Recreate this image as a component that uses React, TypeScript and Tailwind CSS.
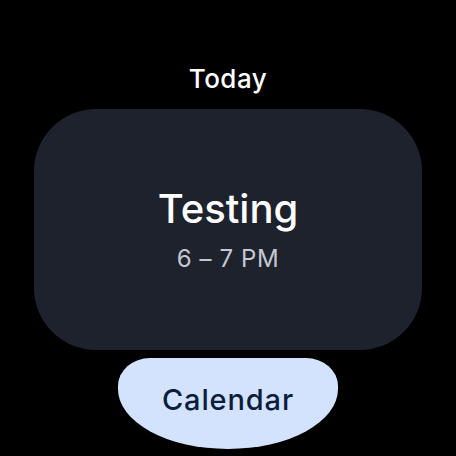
export default function App() {
  return (
    <div
      className="flex h-[456px] w-[456px] flex-col items-center overflow-hidden bg-black"
      style={{ fontFamily: "Inter, 'Open Sans', sans-serif" }}
    >
      <div className="mt-[62px] h-[34px] text-[26px] font-medium leading-[34px] tracking-[0.02em] text-white">Today</div>

      <div className="mt-[13px] flex h-[241px] w-[388px] flex-col items-center rounded-[62px] bg-[#1e222d] pt-[76px]">
        <div className="text-[40px] font-medium leading-[48px] text-white">Testing</div>
        <div className="mt-[10px] text-[24px] leading-[32px] tracking-wide text-[#c5c8d2]">6 – 7 PM</div>
      </div>

      <button className="mt-[8px] flex h-[91px] w-[220px] items-start justify-center rounded-[32px_32px_110px_110px/28px_28px_60px_60px] bg-[#d3e3fd] pt-[24px] text-[29px] font-medium leading-[36px] tracking-[0.03em] text-[#0b1d3d]">
        Calendar
      </button>
    </div>
  );
}
